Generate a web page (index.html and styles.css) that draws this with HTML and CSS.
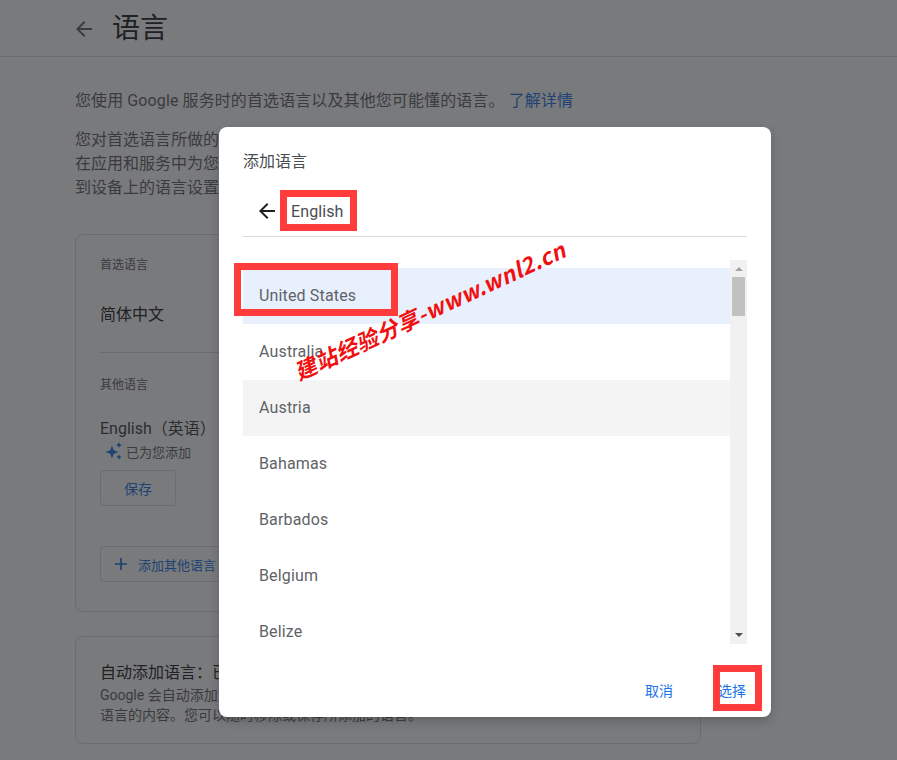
FILE: index.html
```html
<!DOCTYPE html>
<html lang="zh-CN">
<head>
<meta charset="utf-8">
<title>语言</title>
<link rel="stylesheet" href="styles.css">
</head>
<body>
<div class="page">
  <header class="topbar">
    <svg class="back-icon" viewBox="0 0 24 24" width="24" height="24"><path d="M20 11H7.83l5.59-5.59L12 4l-8 8 8 8 1.41-1.41L7.83 13H20z"/></svg>
    <h1 class="page-title">语言</h1>
  </header>
  <main class="content">
    <p class="intro">您使用 Google 服务时的首选语言以及其他您可能懂的语言。 <a class="link">了解详情</a></p>
    <p class="intro-long">您对首选语言所做的更改将应用于所有 Google 服务，<br>在应用和服务中为您显示相应语言的内容。如需更改，<br>到设备上的语言设置中进行调整。</p>
    <section class="card card-langs">
      <div class="label">首选语言</div>
      <div class="lang-primary">简体中文</div>
      <div class="divider"></div>
      <div class="label">其他语言</div>
      <div class="lang-other">English（英语）</div>
      <div class="added">
        <svg class="sparkle" viewBox="0 0 20 20" width="20" height="20"><path d="M8 4.5 9.7 9.3 14.5 11 9.7 12.7 8 17.5 6.3 12.7 1.5 11 6.3 9.3z"/><path d="M15 1 15.9 3.1 18 4 15.9 4.9 15 7 14.1 4.9 12 4 14.1 3.100z"/><path d="M15 13 15.8 15.200 18 16 15.800 16.800 15 19 14.200 16.800 12 16 14.200 15.200z"/></svg>
        <span>已为您添加</span>
      </div>
      <button class="btn btn-save">保存</button>
      <button class="btn btn-add">
        <svg class="plus" viewBox="0 0 14 14" width="12" height="12"><path d="M6 0h2v6h6v2H8v6H6V8H0V6h6z"/></svg>
        <span>添加其他语言</span>
      </button>
    </section>
    <section class="card card-auto">
      <div class="auto-title">自动添加语言：已开启</div>
      <p class="auto-desc">Google 会自动添加您可能懂的语言，以便为您显示这些<br>语言的内容。您可以随时移除或保存所添加的语言。</p>
    </section>
  </main>
</div>

<div class="scrim"></div>

<div class="dialog">
  <div class="dialog-title">添加语言</div>
  <div class="search-row">
    <svg class="dialog-back" viewBox="0 0 24 24" width="24" height="24"><path d="M20 11H7.83l5.59-5.59L12 4l-8 8 8 8 1.41-1.41L7.83 13H20z"/></svg>
    <span class="search-text">English</span>
  </div>
  <div class="list-wrap">
    <ul class="list">
      <li class="item selected">United States</li>
      <li class="item">Australia</li>
      <li class="item hover">Austria</li>
      <li class="item">Bahamas</li>
      <li class="item">Barbados</li>
      <li class="item">Belgium</li>
      <li class="item">Belize</li>
    </ul>
    <div class="scrollbar">
      <span class="arrow arrow-up"></span>
      <span class="thumb"></span>
      <span class="arrow arrow-down"></span>
    </div>
  </div>
  <div class="dialog-actions">
    <button class="text-btn">取消</button>
    <button class="text-btn">选择</button>
  </div>
</div>

<div class="mark mark-search"></div>
<div class="mark mark-item"></div>
<div class="mark mark-select"></div>
<div class="watermark">建站经验分享-www.wnl2.cn</div>
</body>
</html>
```
FILE: styles.css
```css
* { box-sizing: border-box; }
html, body { margin: 0; padding: 0; height: 760px; overflow: hidden; background: #fff; }
body { font-family: Roboto, "Noto Sans CJK SC", sans-serif; color: #3c4043; position: relative; }

.page { height: 760px; overflow: hidden; }
.topbar { height: 57px; border-bottom: 1px solid #dadce0; display: flex; align-items: center; padding: 2px 0 0 72px; gap: 16px; }
.back-icon { fill: #5f6368; flex: none; }
.page-title { margin: 0; font-size: 28px; font-weight: 400; color: #202124; line-height: 36px; }

.content { width: 626px; margin-left: 75px; padding-top: 32px; }
.intro { margin: 0 0 15px; font-size: 16px; line-height: 24px; color: #5f6368; letter-spacing: .1px; }
.intro-long { margin: 0 0 34px; font-size: 16px; line-height: 24px; color: #5f6368; }
.link { color: #1a73e8; }

.card { border: 1px solid #dadce0; border-radius: 8px; padding: 0 24px; }
.card-langs { height: 378px; padding-top: 21px; display: flex; flex-direction: column; align-items: flex-start; }
.card-auto { height: 108px; margin-top: 24px; padding-top: 24px; }

.label { font-size: 12px; line-height: 18px; color: #5f6368; }
.lang-primary { font-size: 16px; line-height: 24px; color: #202124; margin-top: 29px; }
.divider { height: 1px; width: 100%; background: #dadce0; margin: 25px 0 23px; }
.lang-other { font-size: 16px; line-height: 24px; color: #3c4043; margin-top: 23px; }
.added { display: flex; align-items: center; gap: 2px; font-size: 13px; line-height: 20px; color: #5f6368; margin-top: 2px; margin-left: 4px; }
.sparkle { fill: #1a73e8; width: 20px; height: 20px; margin-top: -4px; }
.btn { background: #fff; border: 1px solid #dadce0; border-radius: 4px; font: inherit; font-size: 14px; color: #1a73e8; height: 36px; display: flex; align-items: center; padding: 0; }
.btn-save { width: 76px; justify-content: center; margin-top: 7px; }
.btn-add { width: 180px; margin-top: 40px; padding-left: 14px; gap: 11px; font-size: 13px; }
.plus { fill: #1a73e8; flex: none; }

.auto-title { font-size: 16px; line-height: 24px; color: #202124; }
.auto-desc { margin: 0; font-size: 14px; line-height: 20px; color: #5f6368; }

.scrim { position: absolute; inset: 0; background: rgba(32, 33, 36, .6); }

.dialog { position: absolute; left: 219px; top: 127px; width: 552px; height: 590px; background: #fff; border-radius: 8px; box-shadow: 0 4px 10px rgba(32, 33, 36, .25); padding: 25px 24px 0; display: flex; flex-direction: column; }
.dialog-title { font-size: 16px; line-height: 20px; color: #4a4d50; }
.search-row { height: 52px; margin-top: 13px; border-bottom: 1px solid #dadce0; display: flex; align-items: center; padding-left: 12px; gap: 12px; flex: none; }
.dialog-back { fill: #202124; flex: none; }
.search-text { font-size: 16px; color: #4a4d50; letter-spacing: .1px; padding-top: 2px; }

.list-wrap { margin-top: 23px; height: 384px; display: flex; overflow: hidden; flex: none; }
.list { list-style: none; margin: 0; padding: 8px 0 0; flex: 1; }
.item { height: 56px; line-height: 56px; padding-left: 16px; font-size: 16px; color: #5f6368; letter-spacing: .15px; }
.item.selected { background: #e8f0fe; }
.item.hover { background: #f4f4f4; }

.scrollbar { width: 17px; background: #f1f1f1; display: flex; flex-direction: column; align-items: center; flex: none; }
.arrow { width: 0; height: 0; border-left: 4px solid transparent; border-right: 4px solid transparent; flex: none; }
.arrow-up { border-bottom: 4px solid #a3a3a3; margin-top: 7px; }
.thumb { width: 13px; height: 39px; background: #c1c1c1; margin-top: 6px; }
.arrow-down { border-top: 4px solid #505050; margin-top: auto; margin-bottom: 7px; }

.dialog-actions { display: flex; justify-content: flex-end; gap: 45px; padding: 37px 1px 0 0; }
.text-btn { background: none; border: 0; padding: 0; font: inherit; font-size: 14px; line-height: 20px; color: #1a73e8; }

.mark { position: absolute; border: 7px solid #ff3b3b; }
.mark-search { left: 280px; top: 190px; width: 77px; height: 41px; }
.mark-item { left: 234px; top: 263px; width: 164px; height: 53px; }
.mark-select { left: 713px; top: 665px; width: 49px; height: 46px; }

.watermark { position: absolute; left: 281px; top: 295px; width: 298px; font-family: "Noto Sans CJK SC", sans-serif; font-size: 22px; line-height: 28px; font-weight: 700; font-style: italic; letter-spacing: .5px; color: #f01010; white-space: nowrap; transform: rotate(-24.900deg); }
```
